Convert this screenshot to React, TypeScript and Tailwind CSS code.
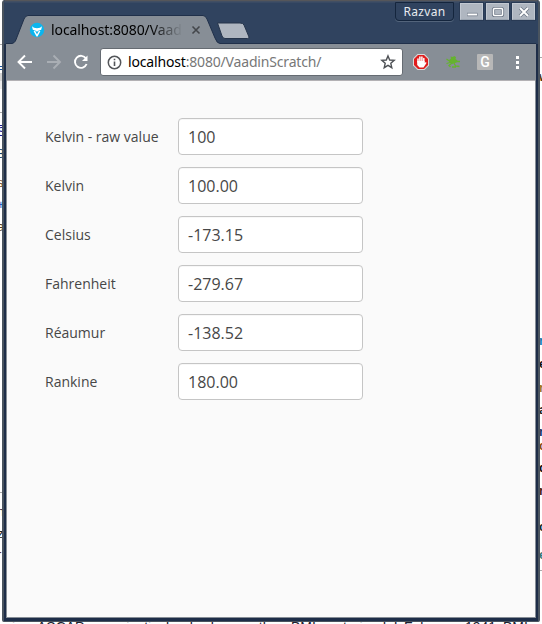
import React from 'react';

const fields = [
  { label: 'Kelvin - raw value', value: '100' },
  { label: 'Kelvin', value: '100.00' },
  { label: 'Celsius', value: '-173.15' },
  { label: 'Fahrenheit', value: '-279.67' },
  { label: 'Réaumur', value: '-138.52' },
  { label: 'Rankine', value: '180.00' },
];

// Clipped pieces of the page lying behind the browser window.
const leftBits = [
  { text: '=', style: 'h-[64px] text-[#14509c]' },
  { text: 'S', style: 'h-[22px] text-[#1a1a90]' },
  { text: '8', style: 'h-[29px] text-[#153e63]' },
  { text: 's', style: 'h-[22px] text-[#7b4b1b]' },
  { text: '+', style: 'h-[22px] text-[#1a5fc4]' },
  { text: 'a', style: 'h-[285px] text-[#5a3a1a]' },
  { text: 'n', style: 'h-[22px] text-[#402838]' },
  { text: 'z', style: 'h-[21px] text-[#222222]' },
  { text: 'r', style: 'h-[18px] text-[#552222]' },
];

const rightBits = [
  { text: 'w', style: 'h-[264px] text-[#513410]' },
  { text: 'r', style: 'h-[23px] text-[#147dad]' },
  { text: 'e', style: 'h-[24px] text-[#111111]' },
  { text: 'r', style: 'h-[22px] text-[#a07820]' },
  { text: 'a', style: 'h-[22px] text-[#222222]' },
  { text: 'n', style: 'h-[14px] text-[#14345c]' },
  { text: 'c', style: 'h-[22px] text-[#8a4a10]' },
  { text: 'd', style: 'h-[23px] text-[#111111]' },
  { text: 'r', style: 'h-[36px] text-[#4a2510]' },
  { text: 'c', style: 'h-[28px] text-[#142b2b]' },
  { text: 'e', style: 'h-[18px] text-[#387878]' },
];

function Backdrop() {
  return (
    <div className="absolute inset-0 flex flex-col overflow-hidden bg-white font-['Liberation_Sans',sans-serif] text-[13px] leading-[18px]">
      <svg className="absolute inset-0" width="542" height="624">
        <path d="M0 44.500H3M0 112.500H3M0 492.500H3M539 57.500H542M539 570.500H542" stroke="#aaaaaa" />
        <rect y="73" width="3" height="8" fill="#d5d5d5" />
        <rect y="81" width="3" height="8" fill="#ececec" />
        <path d="M0 125.500H2M0 135.500H2" stroke="#1a1a90" />
      </svg>
      <div className="flex h-[618px] shrink-0 justify-between">
        <div className="-ml-[3px] flex flex-col pt-[59px]">
          {leftBits.map((b, i) => <span key={i} className={b.style}>{b.text}</span>)}
        </div>
        <div className="flex w-[3px] flex-col pt-[68px] font-bold">
          {rightBits.map((b, i) => <span key={i} className={b.style}>{b.text}</span>)}
        </div>
      </div>
      <div className="flex shrink-0 whitespace-nowrap pl-[12px] text-[14px] text-[#202030]">
        <span className="w-[25px]">is,</span>
        <span className="w-[254px]">ASCAP, organizatively, slowly, over the</span>
        <span className="w-[113px]">BMI, restrained. In</span>
        <span className="w-[61px]">February</span>
        <span className="w-[38px]">1941,</span>
        <span>BMI</span>
      </div>
    </div>
  );
}

function TitleBar() {
  return (
    <div className="relative flex h-[44px] shrink-0 justify-between bg-[#30435f] pr-[3px]">
      <svg className="absolute left-0 top-0" width="534" height="44" viewBox="4 0 534 44">
        <path d="M4 0H538V1.500H4Z" fill="#55565a" />
        <path d="M4 2H538" stroke="#43526a" />
        <path d="M6 43.500H12C15 43 16 40 17 37L24 19Q25.500 15.500 28 15.500H203Q205.500 15.500 207 19L215 38Q217 43.500 220 43.500H536V45H6Z" fill="#878e96" stroke="#20304a" />
        <path d="M217.500 23H240Q243 23 244 25L249 37Q249.500 38.500 247.500 38.500H225Q223 38.500 222 36Z" fill="#afb6c0" stroke="#26354b" />
        <circle cx="37" cy="30" r="7.200" fill="#0bb5ee" />
        <path d="M32 26.300Q33.500 28.200 37 28.200Q40.500 28.200 42 26.300L41.200 29.700Q38.500 30 37 31.700Q35.500 30 32.800 29.700Z" fill="white" />
        <path d="M34.300 30.800 37 35.800 39.700 30.800" fill="none" stroke="white" strokeWidth="1.500" strokeLinejoin="round" />
        <path d="m192.500 26.500 7 7m0-7-7 7" stroke="#44474b" strokeWidth="1.600" />
      </svg>
      <div className="relative pl-[47px] pt-[20px]">
        <div className="w-[132px] overflow-hidden whitespace-nowrap bg-gradient-to-r from-black from-75% to-transparent bg-clip-text text-[14px] leading-[20px] tracking-[-0.1px] text-transparent">
          localhost:8080/Vaadin
        </div>
      </div>
      <div className="relative flex">
        <div className="mr-[6px] mt-[2px] flex h-[19px] w-[59px] items-center justify-center rounded-b-[4px] border border-[#14253d] text-[12px] leading-[18px] tracking-[0.3px] text-[#e8ebef] shadow-[0_1px_0_#53647b]">
          Razvan
        </div>
        <div className="mt-[3px] flex h-[17px] w-[75px] justify-between">
          {['min', 'max', 'close'].map((kind) => (
            <div key={kind} className="flex w-[23px] items-center justify-center border border-[#c2c8d1] border-b-[#9aa4b0] bg-[#afb6c0] shadow-[0_0_0_1px_#293a54]">
              <svg width="16" height="14" viewBox="0 0 16 14" fill="none" strokeLinejoin="round">
                {kind === 'min' && <><path d="M3 9.500H13.500" stroke="#707a88" strokeWidth="3.400" /><path d="M3.500 9.500H13" stroke="#fff" strokeWidth="1.900" /></>}
                {kind === 'max' && <><rect x="3.500" y="3.500" width="9" height="7" rx="1" stroke="#707a88" strokeWidth="3.200" /><rect x="3.500" y="3.500" width="9" height="7" rx="1" stroke="#fff" strokeWidth="1.500" /></>}
                {kind === 'close' && <><path d="m4 3 8 8m0-8-8 8" stroke="#707a88" strokeWidth="3.500" /><path d="m4 3 8 8m0-8-8 8" stroke="#fff" strokeWidth="1.900" /></>}
              </svg>
            </div>
          ))}
        </div>
      </div>
    </div>
  );
}

function Toolbar() {
  return (
    <div className="flex h-[36px] shrink-0 items-center bg-[#878e96]">
      <svg className="shrink-0" width="93" height="36" viewBox="7 44 93 36" fill="none" stroke="white" strokeWidth="1.900">
        <path d="M32 62H19M25 55.500 18.500 62 25 68.500" />
        <path d="M47 62H59M53.500 55.500 60 62 53.500 68.500" stroke="#a9aeb4" />
        <path d="M86 58.500A6 6 0 1 0 86.600 64" />
        <path d="M87.500 55.500V61H82Z" fill="white" stroke="none" />
      </svg>
      <div className="flex h-[28px] w-[303px] shrink-0 items-center rounded-[3px] border border-[#656b72] bg-white">
        <svg className="ml-[5px]" width="17" height="17" viewBox="0 0 17 17" fill="none">
          <circle cx="8.500" cy="8.500" r="6.200" stroke="#54565a" strokeWidth="1.500" />
          <path d="M8.500 7.500V12M8.500 4.700V6.200" stroke="#54565a" strokeWidth="1.600" />
        </svg>
        <div className="ml-[5px] w-[251px] whitespace-nowrap text-[14px] leading-[20px] tracking-[-0.17px] text-[#777777]">
          <span className="text-black">localhost</span>:8080/VaadinScratch/
        </div>
        <svg className="ml-[1px]" width="16" height="16" viewBox="0 0 16 16" fill="none">
          <path d="M8 1.900 9.700 6 14.200 6.400 10.800 9.300 11.800 13.700 8 11.400 4.200 13.700 5.200 9.300 1.800 6.400 6.300 6Z" stroke="#4e5155" strokeWidth="1.400" />
        </svg>
      </div>
      <svg className="shrink-0" width="132" height="36" viewBox="403 44 132 36">
        <path d="M417.500 54H424.500L429 58.500V65.500L424.500 70H417.500L413 65.500V58.500Z" fill="#d9d9d9" />
        <path d="M418 55H424L428 59V65L424 69H418L414 65V59Z" fill="#e01c1c" />
        <path d="M418 62V59M419.900 62V57M421.900 62V57M423.800 63V58.500" stroke="white" strokeWidth="1.500" strokeLinecap="round" />
        <path d="M417.200 61H424.600V63L426 62 426.500 63 423.500 67.500H419.500L417.200 65Z" fill="white" />
        <path d="M449 60 451 58.500 450.500 56.500 453 57 454 56 456 57 455.500 59 457.500 60.500 456.500 62.500 452 64 449.500 62.500Z" fill="#65b32e" />
        <path d="M450 61.500 446.500 59M450 62.500 446.500 63.500M456 61.500 460 61.500M452 63 449 65.500 450.500 67M454 63 455.500 66 459.500 66.500M452 67H456" fill="none" stroke="#65b32e" strokeWidth="1.300" />
        <rect x="477" y="54" width="16" height="16" rx="1" fill="#b7b7b7" />
        <text x="485" y="67" textAnchor="middle" fill="white" fontFamily="Roboto, sans-serif" fontSize="14" fontWeight="500">G</text>
        <path d="M516 56h3v3h-3ZM516 61h3v3h-3ZM516 66h3v3h-3Z" fill="white" />
      </svg>
    </div>
  );
}

export default function App() {
  return (
    <main className="relative h-[624px] w-[542px] overflow-hidden pl-[2px] font-['Noto_Sans',sans-serif]">
      <Backdrop />
      <div className="relative h-[622px] w-[538px] overflow-hidden rounded-t-[3px] rounded-b-[2px] border-x-2 border-b border-x-[#4a545f] border-b-[#4a545f] bg-[#1d2d48]">
        <TitleBar />
        <div className="mx-[2px] flex h-[574px] flex-col border-x border-b border-[#878e96] bg-[#fafafa]">
          <Toolbar />
          <div className="h-px shrink-0 bg-[#b3b1b4]" />
          <form className="flex flex-col gap-[12px] pl-[38px] pt-[37px] font-['Open_Sans',sans-serif] text-[#474747]">
            {fields.map((field) => (
              <label key={field.label} className="flex h-[37px] items-center text-[14px] leading-[20px]">
                <span className="w-[133px] shrink-0">{field.label}</span>
                <input className="h-[37px] w-[185px] rounded-[4px] border border-[#c5c5c5] bg-white px-[9px] pt-px text-[16px] leading-[22px] text-[#474747] shadow-[inset_0_1px_0_#f7f7f7] outline-none" defaultValue={field.value} />
              </label>
            ))}
          </form>
        </div>
      </div>
    </main>
  );
}
